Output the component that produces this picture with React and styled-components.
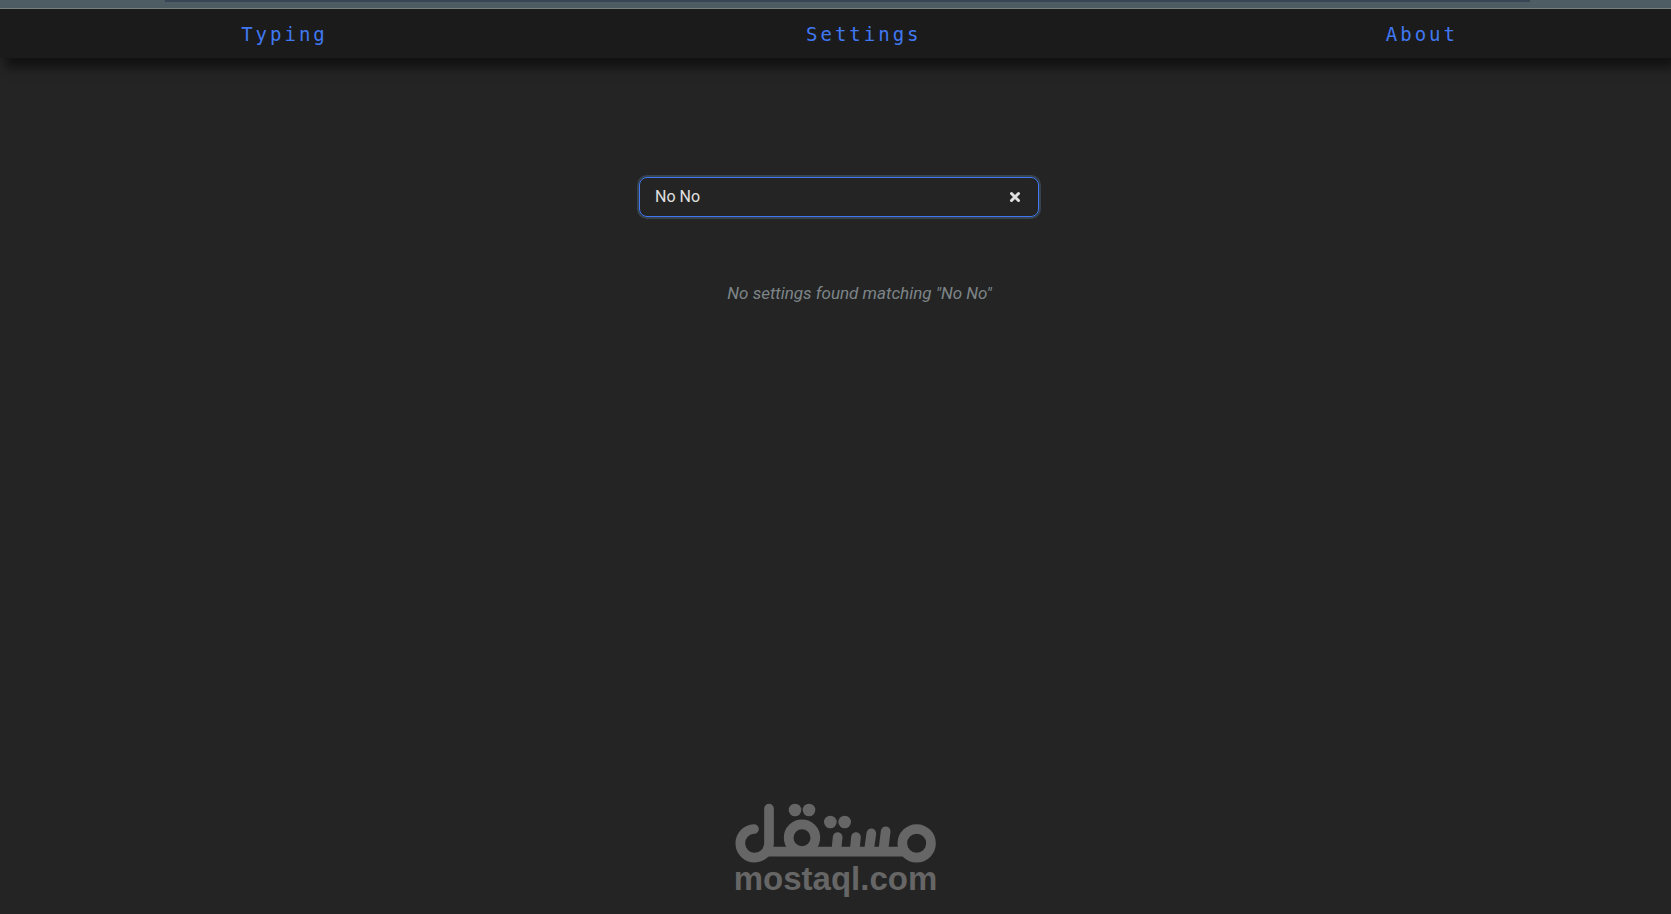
import React, { useState } from 'react';
import styled, { createGlobalStyle } from 'styled-components';

const links = ['Typing', 'Settings', 'About'];

const Logo = () => (
  <LogoMark viewBox="45 40 603 180" aria-hidden="true">
    <g fill="none" stroke="currentColor" strokeWidth="29" strokeLinecap="round">
      <path d="M102 118 A43 43 0 1 0 147 161 V57" />
      <path d="M132 186 H562" strokeLinecap="butt" />
      <circle cx="246" cy="144" r="40" />
      <circle cx="590" cy="161" r="43" />
      <path d="M353 142 L349 182 M408 142 L404 182 M454 131 L447 182 M497 125 L490 182" />
    </g>
    <g fill="currentColor">
      <circle cx="225" cy="61" r="19" />
      <circle cx="267" cy="61" r="19" />
      <circle cx="331" cy="97" r="19" />
      <circle cx="374" cy="97" r="19" />
    </g>
  </LogoMark>
);

const App = () => {
  const [query, setQuery] = useState('No No');

  return (
    <Page>
      <GlobalStyle />
      <TopStrip>
        <TopStripShade />
      </TopStrip>
      <Nav>
        {links.map((name, i) => (
          <NavLink key={name} href={`#${name.toLowerCase()}`} $column={(i + 1) * 2}>
            {name}
          </NavLink>
        ))}
      </Nav>
      <Main>
        <SearchBox>
          <SearchInput
            type="text"
            aria-label="Search settings"
            value={query}
            onChange={(e) => setQuery(e.target.value)}
          />
          <ClearButton type="button" aria-label="Clear search" onClick={() => setQuery('')}>
            <svg width="12" height="12" viewBox="0 0 12 12" aria-hidden="true">
              <path d="M2.5 2.5 L9.5 9.5 M9.5 2.5 L2.5 9.5" stroke="currentColor" strokeWidth="3" strokeLinecap="round" />
            </svg>
          </ClearButton>
        </SearchBox>
        {query && <NoResults>No settings found matching "{query}"</NoResults>}
      </Main>
      <Footer>
        <Logo />
        <LogoText>mostaql.com</LogoText>
      </Footer>
    </Page>
  );
};

export default App;

// Styled Components
const GlobalStyle = createGlobalStyle`
  * {
    box-sizing: border-box;
  }

  body {
    margin: 0;
    background-color: #242424;
    font-family: Roboto, 'Liberation Sans', sans-serif;
    font-size: 16px;
  }
`;

const Page = styled.div`
  display: flex;
  flex-direction: column;
  min-height: 100vh;
`;

const TopStrip = styled.div`
  height: 9px;
  padding: 0 141px 0 165px;
  background-color: #4e5d63;
  border-bottom: 1px solid #78827f;
`;

const TopStripShade = styled.div`
  height: 2px;
  background-color: #364654;
`;

const Nav = styled.nav`
  display: grid;
  grid-template-columns: 240fr auto 476fr auto 462fr auto 212fr;
  align-items: center;
  height: 49px;
  background-color: #1b1b1b;
  box-shadow: 5px 10px 10px rgba(0, 0, 0, 0.5);
`;

const NavLink = styled.a`
  grid-column: ${({ $column }) => $column};
  color: #4078f2;
  font-family: 'DejaVu Sans Mono', monospace;
  font-size: 19px;
  line-height: 24px;
  letter-spacing: 3px;
  text-decoration: none;
`;

const Main = styled.main`
  display: flex;
  flex-direction: column;
  align-items: center;
  gap: 64px;
  padding-top: 119px;
`;

const SearchBox = styled.div`
  display: flex;
  align-items: center;
  width: 400px;
  max-width: 100%;
  height: 40px;
  margin-left: 7px;
  padding: 0 15px;
  border: 1px solid #4078f2;
  border-radius: 8px;
  box-shadow: 0 0 0 2px #36424d;
`;

const SearchInput = styled.input`
  flex: 1;
  min-width: 0;
  padding: 0 0 2px;
  border: none;
  outline: none;
  background: transparent;
  color: #e0e0e0;
  font: inherit;
`;

const ClearButton = styled.button`
  display: flex;
  padding: 2px;
  border: none;
  background: transparent;
  color: #e0e0e0;
  cursor: pointer;
`;

const NoResults = styled.p`
  margin: 0 0 0 48px;
  color: #7d8488;
  font-size: 17px;
  font-style: italic;
  line-height: 24px;
`;

const Footer = styled.footer`
  display: flex;
  flex-direction: column;
  align-items: center;
  margin-top: auto;
  padding-bottom: 20px;
  color: #666;
`;

const LogoMark = styled.svg`
  width: 201px;
  height: 60px;
`;

const LogoText = styled.span`
  font-family: 'Liberation Sans', sans-serif;
  font-size: 33px;
  font-weight: bold;
  line-height: 31px;
`;
